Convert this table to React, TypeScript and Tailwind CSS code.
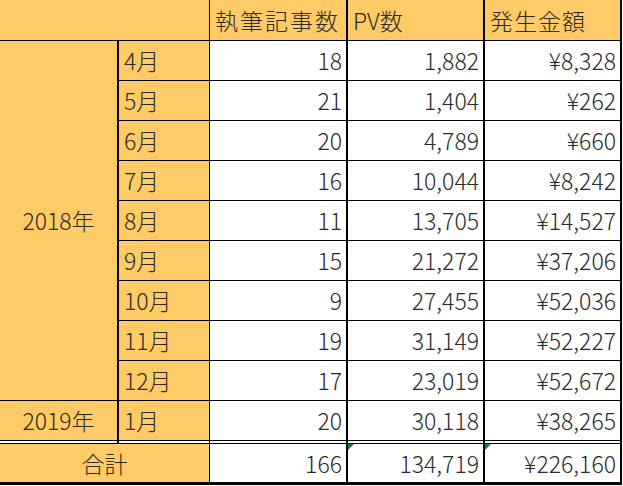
const rows = [
  { month: '4月', posts: 18, pv: '1,882', amount: '¥8,328' },
  { month: '5月', posts: 21, pv: '1,404', amount: '¥262' },
  { month: '6月', posts: 20, pv: '4,789', amount: '¥660' },
  { month: '7月', posts: 16, pv: '10,044', amount: '¥8,242' },
  { month: '8月', posts: 11, pv: '13,705', amount: '¥14,527' },
  { month: '9月', posts: 15, pv: '21,272', amount: '¥37,206' },
  { month: '10月', posts: 9, pv: '27,455', amount: '¥52,036' },
  { month: '11月', posts: 19, pv: '31,149', amount: '¥52,227' },
  { month: '12月', posts: 17, pv: '23,019', amount: '¥52,672' },
];

const yellow = 'bg-[#ffcb66]';
const cell = 'box-border border-black flex items-center';
const num = `${cell} bg-white justify-end pr-[4px] border-b border-r-2`;

function ErrorMark() {
  return (
    <div className="absolute left-0 top-0 w-0 h-0 border-t-[6px] border-t-[#1f7a2e] border-r-[6px] border-r-transparent" />
  );
}

export default function App() {
  return (
    <div
      className="w-[623px] h-[486px] bg-white text-[#2a2a2a] text-[23px] font-light leading-none"
      style={{ fontFamily: '"Noto Sans CJK JP", "Noto Sans", sans-serif' }}
    >
      <div className="grid grid-cols-[119px_91px_138px_137px_137px] grid-rows-[41px_repeat(10,40px)_3px_41px]">
        {/* header */}
        <div className={`${cell} ${yellow} col-span-2 border-b border-r`} />
        <div className={`${cell} ${yellow} border-b border-r-2 pl-[5px] tracking-[2px]`}>執筆記事数</div>
        <div className={`${cell} ${yellow} border-b border-r-2 pl-[5px]`}>PV数</div>
        <div className={`${cell} ${yellow} border-b border-r-2 pl-[5px] tracking-[1px]`}>発生金額</div>

        {/* 2018 */}
        {rows.map((r, i) => (
          <div key={r.month} className="contents">
            {i === 0 && (
              <div className={`${cell} ${yellow} row-span-9 justify-center border-b border-r-2`}>2018年</div>
            )}
            <div className={`${cell} ${yellow} border-b border-r pl-[5px]`}>{r.month}</div>
            <div className={num}>{r.posts}</div>
            <div className={num}>{r.pv}</div>
            <div className={num}>{r.amount}</div>
          </div>
        ))}

        {/* 2019 */}
        <div className={`${cell} ${yellow} justify-center border-b border-r-2`}>2019年</div>
        <div className={`${cell} ${yellow} border-b border-r pl-[5px]`}>1月</div>
        <div className={num}>20</div>
        <div className={num}>30,118</div>
        <div className={num}>¥38,265</div>

        {/* double rule */}
        <div className="box-border border-black border-b border-r-2 bg-white" />
        <div className="box-border border-black border-b border-r bg-white" />
        <div className="box-border border-black border-b border-r-2 bg-white" />
        <div className="box-border border-black border-b border-r-2 bg-white" />
        <div className="box-border border-black border-b border-r-2 bg-white" />

        {/* total */}
        <div className={`${cell} ${yellow} col-span-2 justify-center border-b-[3px] border-r`}>合計</div>
        <div className={`${cell} bg-white justify-end pr-[4px] border-b-[3px] border-r-2`}>166</div>
        <div className={`${cell} relative bg-white justify-end pr-[4px] border-b-[3px] border-r-2`}>
          <ErrorMark />
          134,719
        </div>
        <div className={`${cell} relative bg-white justify-end pr-[4px] border-b-[3px] border-r-2`}>
          <ErrorMark />
          ¥226,160
        </div>
      </div>
    </div>
  );
}
